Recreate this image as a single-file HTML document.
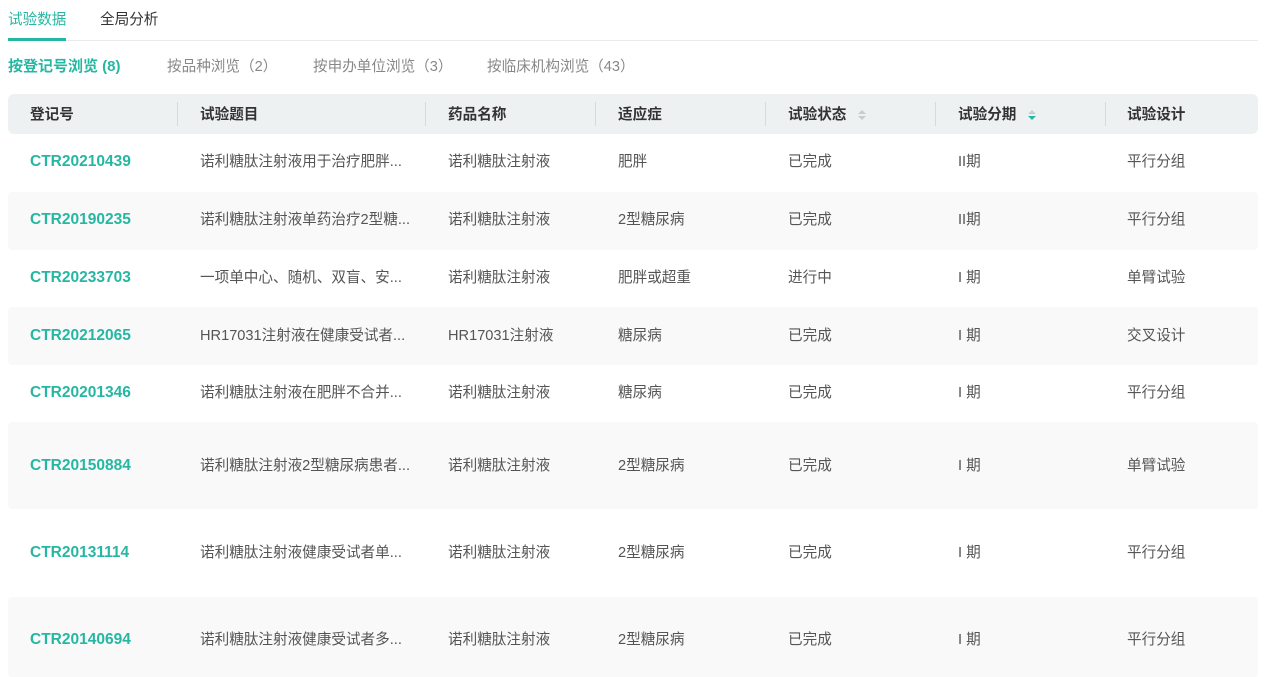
<!DOCTYPE html>
<html><head><meta charset="utf-8"><style>
*{margin:0;padding:0;box-sizing:border-box}
body{width:1280px;height:677px;overflow:hidden;background:#fff;font-family:"Liberation Sans","Noto Sans CJK SC",sans-serif;font-size:14.6px;color:#555;position:relative}
.a{position:absolute;white-space:nowrap;line-height:20px}
.t{color:#26b7a2}
.hd{position:absolute;left:8px;top:94px;width:1250px;height:40px;background:#eef1f2;border-radius:6px}
.sep{position:absolute;top:102px;width:1px;height:24px;background:#d6dadc}
.row{position:absolute;left:8px;width:1250px;background:#f9f9f9;border-radius:4px}
.id{color:#26b7a2;font-weight:bold;font-size:15.5px}
.h{color:#333;font-weight:bold}
</style></head><body>
<div class="a t" style="left:8px;top:10px">试验数据</div>
<div class="a" style="left:100px;top:10px;color:#333">全局分析</div>
<div style="position:absolute;left:8px;top:40px;width:1250px;height:1px;background:#e8eaeb"></div>
<div style="position:absolute;left:8px;top:38px;width:58px;height:3px;background:#26b7a2"></div>
<div class="a t" style="left:8px;top:57px;font-weight:bold;font-size:15px">按登记号浏览 (8)</div>
<div class="a" style="left:167px;top:57px;color:#888">按品种浏览（2）</div>
<div class="a" style="left:313px;top:57px;color:#888">按申办单位浏览（3）</div>
<div class="a" style="left:487px;top:57px;color:#888">按临床机构浏览（43）</div>
<div class="hd"></div>
<div class="sep" style="left:177px"></div><div class="sep" style="left:425px"></div><div class="sep" style="left:595px"></div><div class="sep" style="left:765px"></div><div class="sep" style="left:935px"></div><div class="sep" style="left:1105px"></div>
<div class="a h" style="left:30px;top:105px">登记号</div>
<div class="a h" style="left:200px;top:105px">试验题目</div>
<div class="a h" style="left:448px;top:105px">药品名称</div>
<div class="a h" style="left:618px;top:105px">适应症</div>
<div class="a h" style="left:788px;top:105px">试验状态</div>
<svg style="position:absolute;left:857px;top:108px" width="10" height="14"><path d="M1 6L5 2L9 6Z" fill="#c8cccf"/><path d="M1 8L5 12L9 8Z" fill="#c8cccf"/></svg>
<div class="a h" style="left:958px;top:105px">试验分期</div>
<svg style="position:absolute;left:1027px;top:108px" width="10" height="14"><path d="M1 6L5 2L9 6Z" fill="#c8cccf"/><path d="M1 8L5 12L9 8Z" fill="#26b7a2"/></svg>
<div class="a h" style="left:1127px;top:105px">试验设计</div>
<div class="row" style="top:192px;height:58px"></div>
<div class="row" style="top:307px;height:58px"></div>
<div class="row" style="top:422px;height:87px"></div>
<div class="row" style="top:597px;height:80px"></div>
<div class="a id" style="left:30px;top:152px">CTR20210439</div><div class="a" style="left:200px;top:152px">诺利糖肽注射液用于治疗肥胖...</div><div class="a" style="left:448px;top:152px">诺利糖肽注射液</div><div class="a" style="left:618px;top:152px">肥胖</div><div class="a" style="left:788px;top:152px">已完成</div><div class="a" style="left:958px;top:152px">II期</div><div class="a" style="left:1127px;top:152px">平行分组</div>
<div class="a id" style="left:30px;top:210px">CTR20190235</div><div class="a" style="left:200px;top:210px">诺利糖肽注射液单药治疗2型糖...</div><div class="a" style="left:448px;top:210px">诺利糖肽注射液</div><div class="a" style="left:618px;top:210px">2型糖尿病</div><div class="a" style="left:788px;top:210px">已完成</div><div class="a" style="left:958px;top:210px">II期</div><div class="a" style="left:1127px;top:210px">平行分组</div>
<div class="a id" style="left:30px;top:268px">CTR20233703</div><div class="a" style="left:200px;top:268px">一项单中心、随机、双盲、安...</div><div class="a" style="left:448px;top:268px">诺利糖肽注射液</div><div class="a" style="left:618px;top:268px">肥胖或超重</div><div class="a" style="left:788px;top:268px">进行中</div><div class="a" style="left:958px;top:268px">I 期</div><div class="a" style="left:1127px;top:268px">单臂试验</div>
<div class="a id" style="left:30px;top:326px">CTR20212065</div><div class="a" style="left:200px;top:326px">HR17031注射液在健康受试者...</div><div class="a" style="left:448px;top:326px">HR17031注射液</div><div class="a" style="left:618px;top:326px">糖尿病</div><div class="a" style="left:788px;top:326px">已完成</div><div class="a" style="left:958px;top:326px">I 期</div><div class="a" style="left:1127px;top:326px">交叉设计</div>
<div class="a id" style="left:30px;top:383px">CTR20201346</div><div class="a" style="left:200px;top:383px">诺利糖肽注射液在肥胖不合并...</div><div class="a" style="left:448px;top:383px">诺利糖肽注射液</div><div class="a" style="left:618px;top:383px">糖尿病</div><div class="a" style="left:788px;top:383px">已完成</div><div class="a" style="left:958px;top:383px">I 期</div><div class="a" style="left:1127px;top:383px">平行分组</div>
<div class="a id" style="left:30px;top:456px">CTR20150884</div><div class="a" style="left:200px;top:456px">诺利糖肽注射液2型糖尿病患者...</div><div class="a" style="left:448px;top:456px">诺利糖肽注射液</div><div class="a" style="left:618px;top:456px">2型糖尿病</div><div class="a" style="left:788px;top:456px">已完成</div><div class="a" style="left:958px;top:456px">I 期</div><div class="a" style="left:1127px;top:456px">单臂试验</div>
<div class="a id" style="left:30px;top:543px">CTR20131114</div><div class="a" style="left:200px;top:543px">诺利糖肽注射液健康受试者单...</div><div class="a" style="left:448px;top:543px">诺利糖肽注射液</div><div class="a" style="left:618px;top:543px">2型糖尿病</div><div class="a" style="left:788px;top:543px">已完成</div><div class="a" style="left:958px;top:543px">I 期</div><div class="a" style="left:1127px;top:543px">平行分组</div>
<div class="a id" style="left:30px;top:630px">CTR20140694</div><div class="a" style="left:200px;top:630px">诺利糖肽注射液健康受试者多...</div><div class="a" style="left:448px;top:630px">诺利糖肽注射液</div><div class="a" style="left:618px;top:630px">2型糖尿病</div><div class="a" style="left:788px;top:630px">已完成</div><div class="a" style="left:958px;top:630px">I 期</div><div class="a" style="left:1127px;top:630px">平行分组</div>
</body></html>
